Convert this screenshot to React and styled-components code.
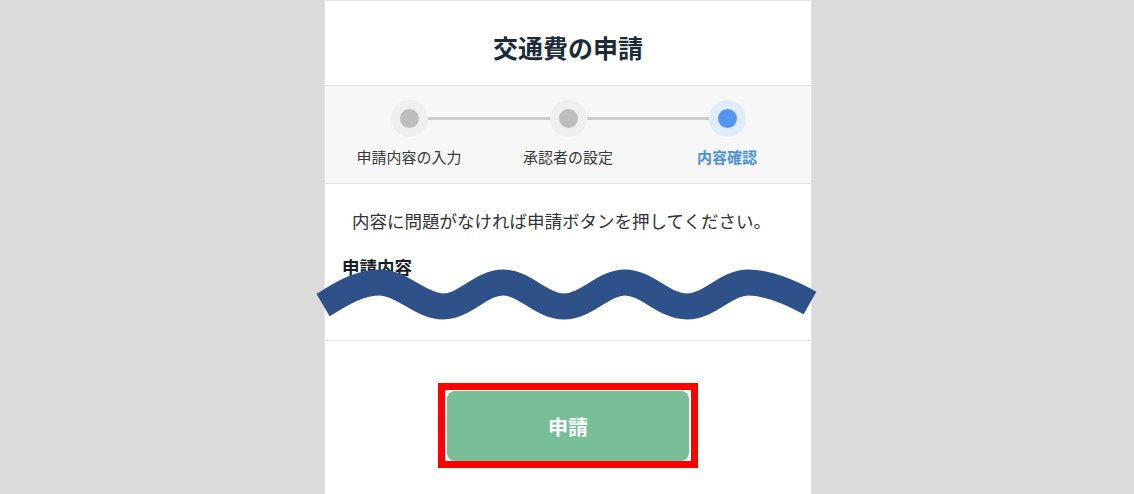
import styled, { createGlobalStyle } from "styled-components";

const GlobalStyle = createGlobalStyle`
  html, body {
    margin: 0;
    padding: 0;
    background: #dbdbdb;
  }
  body {
    font-family: "Noto Sans CJK JP", "Noto Sans", sans-serif;
  }
`;

const steps = [
  { label: "申請内容の入力", active: false },
  { label: "承認者の設定", active: false },
  { label: "内容確認", active: true },
];

function App() {
  return (
    <>
      <GlobalStyle />
      <Page>
        <Panel>
          <Header>
            <Title>交通費の申請</Title>
          </Header>
          <Stepper>
            {steps.map((step, i) => (
              <Step key={step.label}>
                <Track>
                  <Line $hidden={i === 0} />
                  <Dot $active={step.active} />
                  <Line $hidden={i === steps.length - 1} />
                </Track>
                <StepLabel $active={step.active}>{step.label}</StepLabel>
              </Step>
            ))}
          </Stepper>
          <Content>
            <Message>内容に問題がなければ申請ボタンを押してください。</Message>
            <SectionTitle>申請内容</SectionTitle>
          </Content>
          <Footer>
            <Highlight>
              <SubmitButton>申請</SubmitButton>
            </Highlight>
          </Footer>
          <Wave viewBox="300 250 540 90" width="540" height="90">
            <path
              d="M323,304 C340,294 358,281.5 380,281.5 C402,281.5 421,305.5 443,305.5 S481,281.5 503,281.5 S541,305.5 564,305.5 S603,281.5 625,281.5 S664,305.5 687,305.5 S726,281.5 748,281.5 C770,281.5 792,292 810,302"
              fill="none"
              stroke="#2e518a"
              strokeWidth="26"
            />
          </Wave>
        </Panel>
      </Page>
    </>
  );
}

const Page = styled.div`
  height: 494px;
  display: flex;
  justify-content: center;
  overflow: hidden;
`;

const Panel = styled.div`
  position: relative;
  width: 486px;
  min-height: 520px;
  background: #fff;
  border: 1px solid #e6e6e6;
  border-bottom: none;
  margin-left: 2px;
`;

const Header = styled.header`
  height: 85px;
  padding-top: 8px;
  box-sizing: border-box;
  display: flex;
  align-items: center;
  justify-content: center;
  border-bottom: 1px solid #e2e2e2;
`;

const Title = styled.h1`
  margin: 0;
  font-size: 25px;
  line-height: 1;
  font-weight: 700;
  color: #1b2b3a;
`;

const Stepper = styled.div`
  display: grid;
  grid-template-columns: repeat(3, 159px);
  justify-content: center;
  padding: 14px 0 16px;
  background: #f7f7f7;
  border-bottom: 1px solid #e2e2e2;
`;

const Step = styled.div`
  display: flex;
  flex-direction: column;
  align-items: center;
  gap: 10px;
`;

const Track = styled.div`
  width: 100%;
  display: flex;
  align-items: center;
`;

const Line = styled.span`
  flex: 1;
  height: 3px;
  background: ${(p) => (p.$hidden ? "transparent" : "#cccccc")};
`;

const Dot = styled.span`
  width: 37px;
  height: 37px;
  border-radius: 50%;
  background: ${(p) => (p.$active ? "#deedfc" : "#efefef")};
  display: flex;
  align-items: center;
  justify-content: center;

  &::after {
    content: "";
    width: 19px;
    height: 19px;
    border-radius: 50%;
    background: ${(p) => (p.$active ? "#5595ee" : "#bdbdbd")};
  }
`;

const StepLabel = styled.span`
  font-size: 15px;
  line-height: 20px;
  font-weight: ${(p) => (p.$active ? 700 : 400)};
  color: ${(p) => (p.$active ? "#4a90e2" : "#3a3a3a")};
`;

const Content = styled.section`
  padding: 25px 17px 61px;
  border-bottom: 1px solid #e2e2e2;
`;

const Message = styled.p`
  margin: 0;
  padding-left: 10px;
  font-size: 17.5px;
  line-height: 24px;
  color: #333;
`;

const SectionTitle = styled.h2`
  margin: 22px 0 0;
  font-size: 17.5px;
  line-height: 24px;
  font-weight: 700;
  color: #141e28;
`;

const Footer = styled.div`
  display: flex;
  justify-content: center;
  padding: 42px 0 30px;
`;

const Highlight = styled.div`
  border: 7px solid #ff0000;
  padding: 1px 2px 0;
  background: #fff;
`;

const SubmitButton = styled.button`
  display: block;
  width: 242px;
  height: 70px;
  border: none;
  border-radius: 8px;
  background: #78be99;
  color: #fff;
  font-family: inherit;
  font-size: 20px;
  font-weight: 700;
  cursor: pointer;
`;

const Wave = styled.svg`
  position: absolute;
  left: -25px;
  top: 250px;
  overflow: visible;
  pointer-events: none;
`;

export default App;
